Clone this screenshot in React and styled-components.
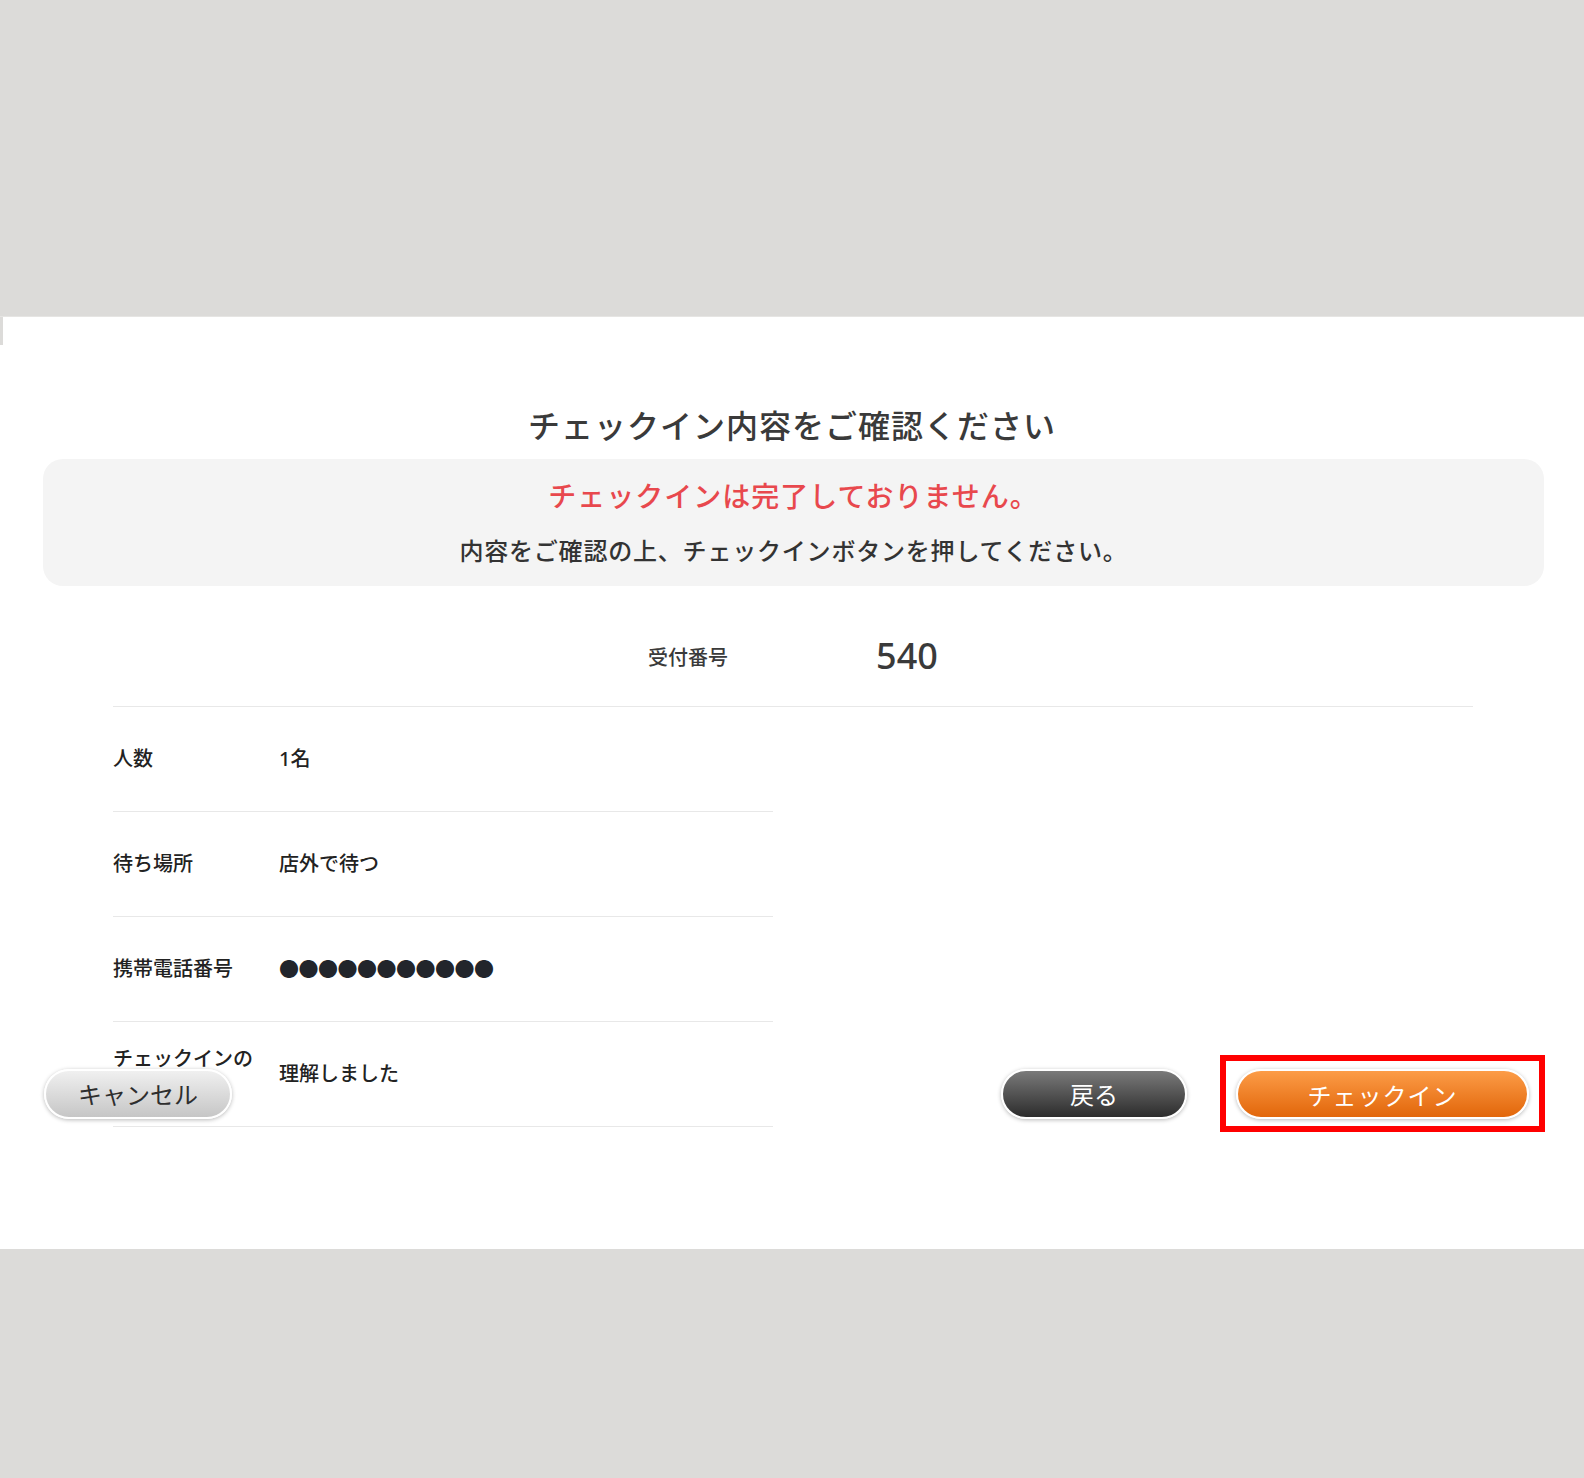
import React from "react"
import styled, { createGlobalStyle } from "styled-components"

const GlobalStyle = createGlobalStyle`
  html, body {
    margin: 0;
    padding: 0;
    background: #dcdbd9;
    font-family: "Noto Sans", "Noto Sans CJK JP", sans-serif;
    -webkit-font-smoothing: antialiased;
  }
`

const Page = styled.div`
  min-height: 1478px;
  padding-top: 316px;
  box-sizing: border-box;
  background: #dcdbd9;
`

const Modal = styled.section`
  position: relative;
  height: 933px;
  box-sizing: border-box;
  background: #fff;
  border-top: 1px solid #e6e5e3;
  padding: 85px 0 0;

  &::before {
    content: "";
    position: absolute;
    left: 0;
    top: 0;
    width: 3px;
    height: 28px;
    background: #dcdbd9;
  }
`

const Title = styled.h1`
  margin: 0 0 9px;
  text-align: center;
  font-size: 32px;
  line-height: 48px;
  font-weight: 500;
  letter-spacing: 1px;
  color: #3a3a3a;
`

const Notice = styled.div`
  margin: 0 40px 0 43px;
  padding: 17px 20px;
  border-radius: 20px;
  background: #f4f4f4;
  display: flex;
  flex-direction: column;
  align-items: center;
  gap: 17px;
`

const NoticeLead = styled.p`
  margin: 0;
  font-size: 28px;
  line-height: 40px;
  font-weight: 500;
  letter-spacing: 1px;
  color: #e8484d;
`

const NoticeText = styled.p`
  margin: 0;
  font-size: 24px;
  line-height: 36px;
  font-weight: 500;
  letter-spacing: 0.8px;
  color: #333;
`

const Details = styled.div`
  margin: 0 111px 0 113px;
`

const ReceiptRow = styled.div`
  height: 121px;
  box-sizing: border-box;
  padding-top: 20px;
  border-bottom: 1px solid #e8e8e8;
  display: flex;
  justify-content: center;
  align-items: center;
  gap: 148px;
  color: #3a3a3a;
`

const ReceiptLabel = styled.span`
  font-size: 20px;
  font-weight: 500;
`

const ReceiptNumber = styled.span`
  font-size: 36px;
  font-weight: 500;
  line-height: 1;
`

const Rows = styled.div`
  width: 660px;
`

const Row = styled.div`
  height: 105px;
  box-sizing: border-box;
  border-bottom: 1px solid #e8e8e8;
  display: grid;
  grid-template-columns: 166px 1fr;
  align-items: center;
  color: #222;
  font-size: 20px;
  line-height: 30px;
  font-weight: 500;
`

const Label = styled.div`
  padding-right: 20px;
`

const Value = styled.div``

const PhoneMask = styled.span`
  font-family: "Noto Sans CJK JP", sans-serif;
  color: #22252b;
  letter-spacing: -0.5px;
`

const Footer = styled.div`
  position: absolute;
  left: 44px;
  right: 39px;
  bottom: 117px;
  display: flex;
  justify-content: space-between;
  align-items: center;
`

const Actions = styled.div`
  display: flex;
  align-items: center;
  gap: 33px;
`

const tones = {
  light: {
    bg: "linear-gradient(#f0f0f0, #c6c6c6)",
    color: "#2e2e2e",
  },
  dark: {
    bg: "linear-gradient(#7a7a7a, #2c2c2c)",
    color: "#fff",
  },
  orange: {
    bg: "linear-gradient(#fc9c47, #e2660a)",
    color: "#fff",
  },
}

const PillButton = styled.button`
  width: ${(p) => p.$width}px;
  height: 50px;
  box-sizing: border-box;
  border: 2px solid #fff;
  border-radius: 25px;
  background: ${(p) => tones[p.$tone].bg};
  color: ${(p) => tones[p.$tone].color};
  box-shadow: 0 1px 4px rgba(0, 0, 0, 0.28);
  font-family: "Noto Sans", "Noto Sans CJK JP", sans-serif;
  font-size: 24px;
  font-weight: 400;
  letter-spacing: ${(p) => p.$spacing || 0}px;
  padding: 0;
  cursor: pointer;
`

const Highlight = styled.div`
  border: 6px solid #ff0000;
  padding: 8px 10px 7px;
  display: flex;
`

const details = [
  { label: "人数", value: "1名" },
  { label: "待ち場所", value: "店外で待つ" },
  { label: "携帯電話番号", value: <PhoneMask>●●●●●●●●●●●</PhoneMask> },
  { label: "チェックインの注意事項", value: "理解しました" },
]

const App = () => {
  return (
    <Page>
      <GlobalStyle />
      <Modal>
        <Title>チェックイン内容をご確認ください</Title>
        <Notice>
          <NoticeLead>チェックインは完了しておりません。</NoticeLead>
          <NoticeText>内容をご確認の上、チェックインボタンを押してください。</NoticeText>
        </Notice>
        <Details>
          <ReceiptRow>
            <ReceiptLabel>受付番号</ReceiptLabel>
            <ReceiptNumber>540</ReceiptNumber>
          </ReceiptRow>
          <Rows>
            {details.map((item) => (
              <Row key={item.label}>
                <Label>{item.label}</Label>
                <Value>{item.value}</Value>
              </Row>
            ))}
          </Rows>
        </Details>
        <Footer>
          <PillButton $tone="light" $width={188}>キャンセル</PillButton>
          <Actions>
            <PillButton $tone="dark" $width={186}>戻る</PillButton>
            <Highlight>
              <PillButton $tone="orange" $width={293} $spacing={1}>
                チェックイン
              </PillButton>
            </Highlight>
          </Actions>
        </Footer>
      </Modal>
    </Page>
  )
}

export default App
